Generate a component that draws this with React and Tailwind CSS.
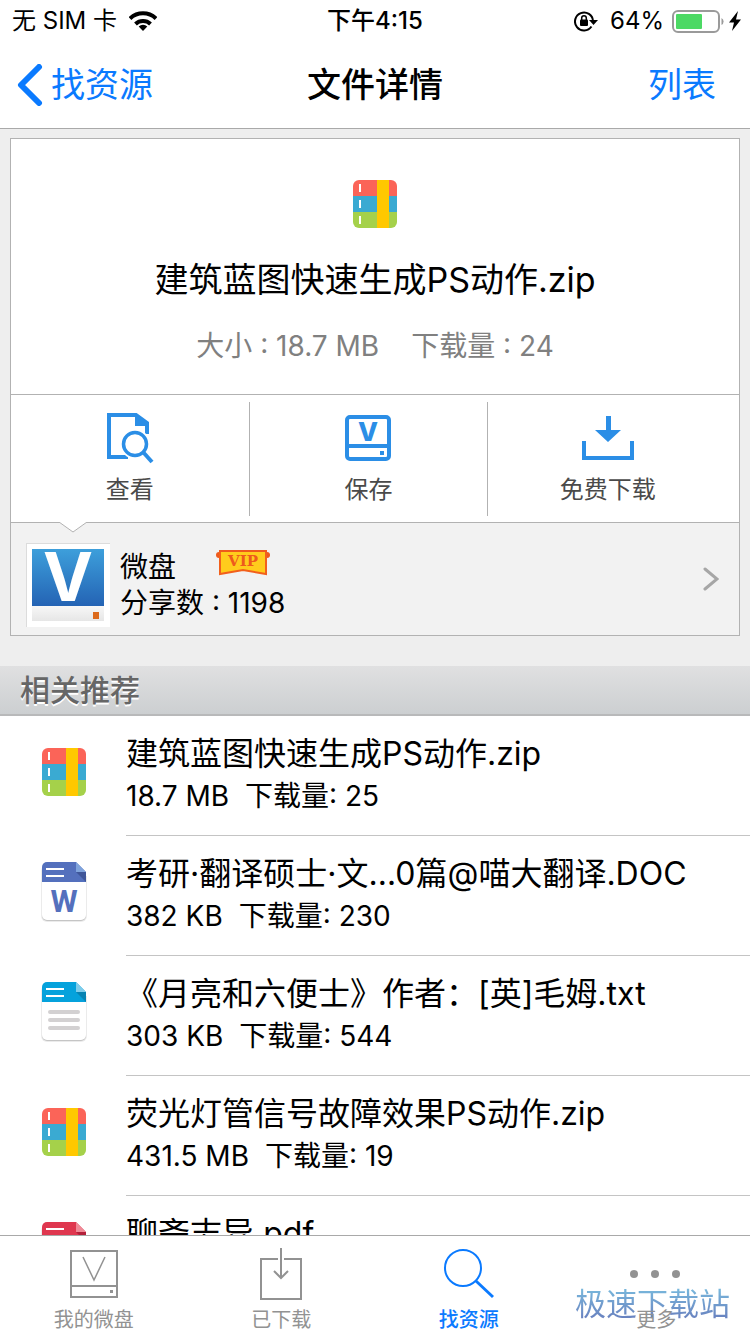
import { useState } from 'react'

/* File detail screen: file card, uploader, related files and tab bar */

const RELATED = [
  { id: 1, type: 'zip', name: '建筑蓝图快速生成PS动作.zip', size: '18.7 MB', downloads: 25 },
  { id: 2, type: 'doc', name: '考研·翻译硕士·文…0篇@喵大翻译.DOC', size: '382 KB', downloads: 230 },
  { id: 3, type: 'txt', name: '《月亮和六便士》作者：[英]毛姆.txt', size: '303 KB', downloads: 544 },
  { id: 4, type: 'zip', name: '荧光灯管信号故障效果PS动作.zip', size: '431.5 MB', downloads: 19 },
  { id: 5, type: 'pdf', name: '聊斋志异.pdf', size: '1.2 MB', downloads: 86 },
]

const ACTIONS = [
  { key: 'view', label: '查看', Icon: ViewIcon },
  { key: 'save', label: '保存', Icon: SaveIcon },
  { key: 'download', label: '免费下载', Icon: DownloadIcon },
]

const TABS = [
  { key: 'disk', label: '我的微盘', Icon: DiskTabIcon },
  { key: 'done', label: '已下载', Icon: DoneTabIcon },
  { key: 'find', label: '找资源', Icon: FindTabIcon },
  { key: 'more', label: '更多', Icon: MoreTabIcon },
]

const DOC_COLORS = {
  doc: { base: '#5470bd', fold: '#7fa3dc', shade: '#3f5699' },
  txt: { base: '#05a2dc', fold: '#7fcdeb', shade: '#0683b3' },
  pdf: { base: '#df374f', fold: '#f08a97', shade: '#b3203a' },
}

function ZipIcon() {
  return (
    <svg width="44" height="48" viewBox="0 0 44 48" aria-hidden="true">
      <clipPath id="zip-round"><rect width="44" height="48" rx="6" /></clipPath>
      <g clipPath="url(#zip-round)">
        <rect width="44" height="16" fill="#fb6458" />
        <rect y="16" width="44" height="16" fill="#3aaad2" />
        <rect y="32" width="44" height="16" fill="#a5d14a" />
        <rect x="24" width="12" height="48" fill="#ffc800" />
        <path d="M7 4v8M7 20v8M7 36v8" stroke="#fff" strokeWidth="2" />
      </g>
    </svg>
  )
}

function DocIcon({ type }) {
  const c = DOC_COLORS[type]
  return (
    <svg width="48" height="60" viewBox="0 0 48 60" aria-hidden="true">
      <rect x="1" y="3" width="46" height="57" rx="6" fill="#000" opacity="0.08" />
      <rect x="2" y="3" width="44" height="56" rx="5" fill="#000" opacity="0.16" />
      <rect x="30" width="18" height="14" fill="#fff" />
      <path d="M2 20h44v33a5 5 0 0 1-5 5H7a5 5 0 0 1-5-5z" fill="#fff" />
      <path d="M7 0h29l10 10v10H2V5a5 5 0 0 1 5-5z" fill={c.base} />
      <path d="M36 10h10v10z" fill={c.shade} />
      <path d="M36 0l10 10H36z" fill={c.fold} />
      <path d="M6 7h18M6 14h18" stroke="#fff" strokeWidth="2" />
      {type === 'doc' && (
        <text x="24" y="50" textAnchor="middle" fontFamily="Roboto, sans-serif" fontSize="31" fontWeight="700" fill={c.base}>W</text>
      )}
      {type === 'txt' && (
        <path d="M10 30h28M10 38h28M10 46h28" stroke="#d3d1d2" strokeWidth="4" strokeLinecap="round" />
      )}
    </svg>
  )
}

function FileIcon({ type }) {
  return type === 'zip' ? <ZipIcon /> : <DocIcon type={type} />
}

function ViewIcon() {
  return (
    <svg width="48" height="52" viewBox="0 0 48 52" fill="none" stroke="#2b8ee6" aria-hidden="true">
      <path d="M22 45H3V3h27l11 8v11" strokeWidth="4" />
      <path d="M29 2l12 8v4H29z" fill="#2b8ee6" stroke="none" />
      <circle cx="29" cy="32" r="15" fill="#fff" stroke="none" />
      <circle cx="29" cy="32" r="11.500" strokeWidth="3.500" />
      <path d="M37 40l9 10" strokeWidth="4" />
    </svg>
  )
}

function SaveIcon() {
  return (
    <svg width="46" height="46" viewBox="0 0 46 46" aria-hidden="true">
      <rect x="2" y="2" width="42" height="42" rx="3" fill="none" stroke="#2b8ee6" strokeWidth="4" />
      <path d="M2 31h42" stroke="#2b8ee6" strokeWidth="4" />
      <rect x="35" y="36" width="4" height="4" fill="#2b8ee6" />
      <text x="23" y="26" textAnchor="middle" fontFamily="Inter, sans-serif" fontSize="26" fontWeight="800" fill="#2b8ee6">V</text>
    </svg>
  )
}

function DownloadIcon() {
  return (
    <svg width="52" height="44" viewBox="0 0 52 44" aria-hidden="true">
      <path d="M2 25v17h48V25" fill="none" stroke="#2b8ee6" strokeWidth="4" />
      <path d="M24 0h5v14h10L26 26 13 14h11z" fill="#2b8ee6" />
    </svg>
  )
}

function DiskTabIcon() {
  return (
    <svg width="48" height="48" viewBox="0 0 48 48" fill="none" stroke="currentColor" strokeWidth="2" aria-hidden="true">
      <path d="M1 1h46v46H1zM1 36h46" />
      <path d="M13 7l11 23L35 7" strokeWidth="1.500" />
      <rect x="40" y="40" width="3" height="3" fill="currentColor" stroke="none" />
    </svg>
  )
}

function DoneTabIcon() {
  return (
    <svg width="42" height="52" viewBox="0 0 42 52" fill="none" stroke="currentColor" strokeWidth="2" aria-hidden="true">
      <path d="M18 11H1v40h40V11H24M21 0v29M14 23l7 7 7-7" />
    </svg>
  )
}

function FindTabIcon() {
  return (
    <svg width="52" height="50" viewBox="0 0 52 50" fill="none" stroke="currentColor" aria-hidden="true">
      <circle cx="20" cy="19" r="18" strokeWidth="2" />
      <path d="M33 32l17 16" strokeWidth="3" />
    </svg>
  )
}

function MoreTabIcon() {
  return (
    <svg width="52" height="50" viewBox="0 0 52 50" fill="currentColor" aria-hidden="true">
      <circle cx="4" cy="25" r="4" />
      <circle cx="25" cy="25" r="4" />
      <circle cx="46" cy="25" r="4" />
    </svg>
  )
}

function StatusBar() {
  return (
    <div className="grid grid-cols-3 items-center h-10 pt-px px-3 text-2xl leading-10">
      <div className="flex items-center gap-3">
        <span>无 SIM 卡</span>
        <svg width="28" height="21" viewBox="0 0 28 21" fill="none" stroke="#000" strokeWidth="4" aria-hidden="true">
          <path d="M1 7.500a19 19 0 0 1 26 0" />
          <path d="M6.500 13a11 11 0 0 1 15 0" />
          <path d="M14 20l-4.300-4.400a6.200 6.200 0 0 1 8.600 0z" fill="#000" stroke="none" />
        </svg>
      </div>
      <span className="text-center font-medium">下午4:15</span>
      <div className="flex items-center justify-end">
        <svg className="mr-3" width="24" height="22" viewBox="0 0 24 22" fill="none" stroke="#000" strokeWidth="2" aria-hidden="true">
          <path d="M17.500 16.500A9 9 0 1 1 19 11" />
          <path d="M15 10h9l-4.500 5z" fill="#000" stroke="none" />
          <rect x="6" y="9.500" width="8" height="6.500" rx="1" fill="#000" stroke="none" />
          <path d="M7.700 10V8a2.300 2.300 0 0 1 4.600 0v2" strokeWidth="1.500" />
        </svg>
        <span className="mr-2">64%</span>
        <svg className="-mr-1" width="70" height="23" viewBox="0 0 70 23" aria-hidden="true">
          <rect x="1" y="1" width="46" height="21" rx="5" fill="none" stroke="#9a9a9a" strokeWidth="2" />
          <rect x="4" y="4" width="26" height="15" rx="1" fill="#4cd964" />
          <path d="M49.500 8a4 4 0 0 1 0 7z" fill="#9a9a9a" />
          <path d="M66 1l-9 11.500h5L60 21l9-11.500h-5z" fill="#000" />
        </svg>
      </div>
    </div>
  )
}

function NavBar() {
  return (
    <header className="grid grid-cols-3 items-center h-22 pt-px text-[34px] leading-10 px-4">
      <a href="#find" className="flex items-center gap-2 text-[#0a7aff]">
        <svg width="27" height="42" viewBox="0 0 27 42" fill="none" stroke="currentColor" strokeWidth="6" strokeLinecap="round" strokeLinejoin="round" aria-hidden="true">
          <path d="M23 3L5 21l18 18" />
        </svg>
        找资源
      </a>
      <h1 className="text-center font-medium">文件详情</h1>
      <a href="#list" className="pr-[18px] text-right text-[#0a7aff]">列表</a>
    </header>
  )
}

function UploaderLogo() {
  return (
    <svg className="mt-3" width="84" height="84" viewBox="0 0 84 84" aria-hidden="true">
      <defs>
        <linearGradient id="logo-blue" x1="0" y1="0" x2="0" y2="1">
          <stop offset="0" stopColor="#3d9fdb" />
          <stop offset="1" stopColor="#2463b4" />
        </linearGradient>
        <linearGradient id="logo-base" x1="0" y1="0" x2="0" y2="1">
          <stop offset="0" stopColor="#f7f7f7" />
          <stop offset="1" stopColor="#e6e6e6" />
        </linearGradient>
      </defs>
      <rect width="84" height="84" fill="#dcdcdc" />
      <rect x="1" y="1" width="83" height="83" fill="#fff" />
      <rect x="6" y="6" width="72" height="57" fill="url(#logo-blue)" />
      <rect x="6" y="63" width="72" height="15" fill="url(#logo-base)" />
      <rect x="67" y="69" width="6" height="7" fill="#dc6a1c" />
      <text x="42" y="58" textAnchor="middle" fontFamily="Inter, sans-serif" fontSize="67" fontWeight="700" fill="#fff">V</text>
    </svg>
  )
}

function VipBadge() {
  return (
    <svg width="54" height="27" viewBox="0 0 54 27" role="img" aria-label="VIP">
      <circle cx="3" cy="6" r="3" fill="#ee5a1c" />
      <circle cx="51" cy="6" r="3" fill="#ee5a1c" />
      <path d="M4 2h46v23L27 21 4 25z" fill="#ffcc1c" stroke="#f2601c" strokeWidth="2" />
      <path d="M3 1h48v2H3z" fill="#ee5a1c" />
      <text x="27" y="17" textAnchor="middle" fontFamily="DejaVu Serif, serif" fontSize="15" fontWeight="700" fill="#ee5a1c">VIP</text>
    </svg>
  )
}

function FileCard() {
  return (
    <section className="border border-[#b2b2b2] bg-white">
      <div className="flex flex-col items-center h-64 pt-[41px] border-b border-[#b2b2b2]">
        <div className="h-12"><ZipIcon /></div>
        <h2 className="mt-7 text-[34px] leading-12">建筑蓝图快速生成PS动作.zip</h2>
        <p className="mt-[22px] flex gap-8 text-[28px] leading-10 text-[#808080]">
          <span>大小 : 18.7 MB</span>
          <span>下载量 : 24</span>
        </p>
      </div>

      <div className="grid grid-cols-3 pt-[7px] pb-[6px] pr-3 divide-x divide-[#b2b2b2]">
        {ACTIONS.map(({ key, label, Icon }) => (
          <button key={key} className="flex flex-col items-center h-[114px] text-2xl text-[#4a4a4a]">
            <span className="flex items-center h-18"><Icon /></span>
            <span className="leading-8">{label}</span>
          </button>
        ))}
      </div>

      <a href="#uploader" className="relative flex items-center h-[113px] pl-[15px] pr-5 bg-[#f2f2f2] border-t border-[#b2b2b2]">
        <svg className="absolute left-12 -top-px" width="28" height="11" viewBox="0 0 28 11" aria-hidden="true">
          <path d="M0 0h28L14 10z" fill="#fff" />
          <path d="M0 0l14 10L28 0" fill="none" stroke="#b2b2b2" />
        </svg>
        <UploaderLogo />
        <div className="flex-1 mt-3 ml-[10px] text-[28px] leading-9">
          <div className="flex items-start gap-10">
            <span>微盘</span>
            <VipBadge />
          </div>
          <div>分享数 : 1198</div>
        </div>
        <svg width="16" height="24" viewBox="0 0 16 24" fill="none" stroke="#a6a6a6" strokeWidth="3" strokeLinecap="round" aria-hidden="true">
          <path d="M2 2l12 10L2 22" />
        </svg>
      </a>
    </section>
  )
}

function RelatedList() {
  return (
    <ul className="bg-white">
      {RELATED.map(file => (
        <li key={file.id} className="flex h-30">
          <a href={`#file-${file.id}`} className="flex flex-1 min-w-0">
            <span className="flex items-center justify-center shrink-0 w-[126px] h-28 pl-0.5"><FileIcon type={file.type} /></span>
            <span className="flex-1 min-w-0 pt-4 border-b border-[#c4c4c4]">
              <span className="block truncate text-[32px] leading-11">{file.name}</span>
              <span className="flex gap-4 text-[28px] leading-10">
                <span>{file.size}</span>
                <span>下载量: {file.downloads}</span>
              </span>
            </span>
          </a>
        </li>
      ))}
    </ul>
  )
}

function TabBar() {
  const [active, setActive] = useState('find')

  return (
    <nav className="relative grid grid-cols-4 h-[99px] shrink-0 border-t border-[#a9a9a9] bg-white">
      <span className="absolute right-5 bottom-2 text-[31px] leading-11 text-transparent bg-clip-text bg-linear-to-b from-[#7cc4e2] to-[#6474b8] pointer-events-none">
        极速下载站
      </span>
      {TABS.map(({ key, label, Icon }) => (
        <button
          key={key}
          onClick={() => setActive(key)}
          className={active === key
            ? 'relative flex flex-col items-center pt-2 text-xl font-medium text-[#0a7aff]'
            : 'relative flex flex-col items-center pt-2 text-xl text-[#929292]'}
        >
          <span className="flex items-center h-15"><Icon /></span>
          <span className="mt-1 leading-6">{label}</span>
        </button>
      ))}
    </nav>
  )
}

export default function App() {
  return (
    <div className="flex flex-col h-screen overflow-hidden bg-[#eeeeee] text-black font-[Inter,'Noto_Sans_CJK_SC',sans-serif]">
      <div className="shrink-0 bg-white border-b border-[#a9a9a9]">
        <StatusBar />
        <NavBar />
      </div>
      <main className="flex-1 min-h-0 overflow-hidden">
        <div className="px-[10px] pt-[9px] pb-[30px]">
          <FileCard />
        </div>
        <h2 className="h-[50px] px-5 text-[30px] leading-12 font-medium text-[#666] bg-linear-to-b from-[#e0e0e1] to-[#cccfd1] border-b-2 border-[#b8b9ba] [text-shadow:0_2px_0_#fff]">
          相关推荐
        </h2>
        <RelatedList />
      </main>
      <TabBar />
    </div>
  )
}
